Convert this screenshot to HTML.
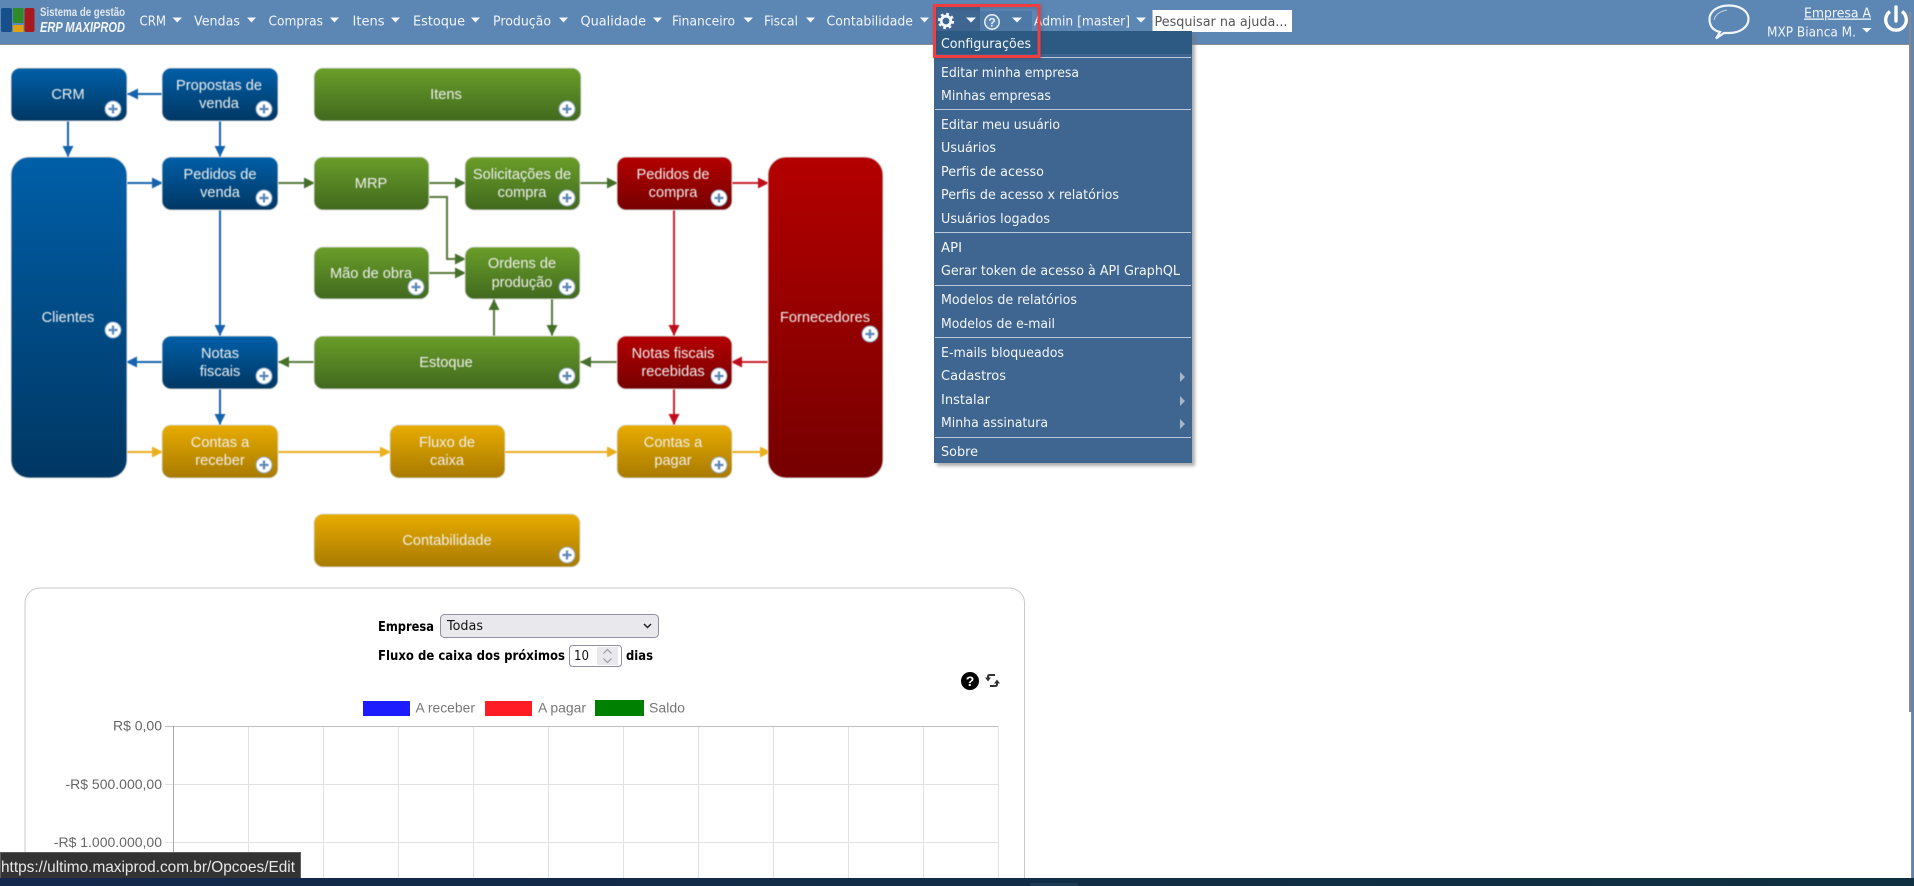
<!DOCTYPE html>
<html lang="pt-BR">
<head>
<meta charset="utf-8">
<title>ERP MAXIPROD</title>
<style>
html,body{margin:0;padding:0;width:1914px;height:886px;overflow:hidden;background:#fff}
svg{display:block}
.nav{font:13px "DejaVu Sans","Liberation Sans",sans-serif;fill:#f1f5f9}
.m{font:13px "DejaVu Sans","Liberation Sans",sans-serif;fill:#f4f6f9}
.d{font:14.6px "Liberation Sans",Arial,sans-serif;fill:#f0f0f0;text-anchor:middle}
.b{font:bold 13px "DejaVu Sans","Liberation Sans",sans-serif;fill:#000}
.r{font:13px "DejaVu Sans","Liberation Sans",sans-serif;fill:#111}
.l{font:14px "Liberation Sans",Arial,sans-serif;fill:#777}
.a{font:14px "Liberation Sans",Arial,sans-serif;fill:#666;text-anchor:end}
</style>
</head>
<body>
<svg width="1914" height="886" viewBox="0 0 1914 886" xmlns="http://www.w3.org/2000/svg">
<defs>
<linearGradient id="gb" x1="0" y1="0" x2="0" y2="1"><stop offset="0" stop-color="#005fa8"/><stop offset="1" stop-color="#003763"/></linearGradient>
<linearGradient id="gg" x1="0" y1="0" x2="0" y2="1"><stop offset="0" stop-color="#6a9e29"/><stop offset="1" stop-color="#41691e"/></linearGradient>
<linearGradient id="gr" x1="0" y1="0" x2="0" y2="1"><stop offset="0" stop-color="#b40000"/><stop offset="1" stop-color="#760000"/></linearGradient>
<linearGradient id="gy" x1="0" y1="0" x2="0" y2="1"><stop offset="0" stop-color="#e8ac00"/><stop offset="1" stop-color="#a87a00"/></linearGradient>
<linearGradient id="tb" x1="0" y1="0" x2="1" y2="0"><stop offset="0" stop-color="#13284c"/><stop offset="1" stop-color="#0f3040"/></linearGradient>
<marker id="ab" markerUnits="userSpaceOnUse" markerWidth="12" markerHeight="12" refX="11" refY="6" orient="auto"><path d="M0 .5L11 6L0 11.5z" fill="#1563ad"/></marker>
<marker id="ag" markerUnits="userSpaceOnUse" markerWidth="12" markerHeight="12" refX="11" refY="6" orient="auto"><path d="M0 .5L11 6L0 11.5z" fill="#46702a"/></marker>
<marker id="ar" markerUnits="userSpaceOnUse" markerWidth="12" markerHeight="12" refX="11" refY="6" orient="auto"><path d="M0 .5L11 6L0 11.5z" fill="#c00d1a"/></marker>
<marker id="ay" markerUnits="userSpaceOnUse" markerWidth="12" markerHeight="12" refX="11" refY="6" orient="auto"><path d="M0 .5L11 6L0 11.5z" fill="#ebae1c"/></marker>
<g id="plus"><circle r="8" fill="#fff" stroke="#8fa9c9" stroke-width="1"/><path d="M-4.5 0H4.5M0-4.5V4.5" stroke="#5b86b8" stroke-width="2.2"/></g>
</defs>

<rect width="1914" height="886" fill="#fff"/>

<!-- Diagram -->
<g style="filter:blur(.4px)">
<g fill="none" stroke-width="2">
<g stroke="#1563ad">
<path d="M162 94H127" marker-end="url(#ab)"/>
<path d="M68 121V157" marker-end="url(#ab)"/>
<path d="M220 121V157" marker-end="url(#ab)"/>
<path d="M127 183H163" marker-end="url(#ab)"/>
<path d="M220 210V336" marker-end="url(#ab)"/>
<path d="M162 362H126" marker-end="url(#ab)"/>
<path d="M220 389V425" marker-end="url(#ab)"/>
</g>
<g stroke="#55793a">
<path d="M278 183H315" marker-end="url(#ag)"/>
<path d="M429 183H466" marker-end="url(#ag)"/>
<path d="M429 197H447V259H466" marker-end="url(#ag)"/>
<path d="M429 273H466" marker-end="url(#ag)"/>
<path d="M580 183H618" marker-end="url(#ag)"/>
<path d="M617 362H580" marker-end="url(#ag)"/>
<path d="M314 362H278" marker-end="url(#ag)"/>
<path d="M494 336V299" marker-end="url(#ag)"/>
<path d="M552 299V336" marker-end="url(#ag)"/>
</g>
<g stroke="#c8202b">
<path d="M732 183H769" marker-end="url(#ar)"/>
<path d="M674 210V336" marker-end="url(#ar)"/>
<path d="M768 362H731" marker-end="url(#ar)"/>
<path d="M674 389V425" marker-end="url(#ar)"/>
</g>
<g stroke="#ebae1c">
<path d="M127 452H163" marker-end="url(#ay)"/>
<path d="M278 452H391" marker-end="url(#ay)"/>
<path d="M505 452H618" marker-end="url(#ay)"/>
<path d="M732 452H771" marker-end="url(#ay)"/>
</g>
</g>

<g stroke="#dcdcdc" stroke-width="1">
<rect x="11" y="68" width="116" height="53" rx="9" fill="url(#gb)"/>
<rect x="162" y="68" width="116" height="53" rx="9" fill="url(#gb)"/>
<rect x="314" y="68" width="267" height="53" rx="9" fill="url(#gg)"/>
<rect x="11" y="157" width="116" height="321" rx="18" fill="url(#gb)"/>
<rect x="162" y="157" width="116" height="53" rx="9" fill="url(#gb)"/>
<rect x="314" y="157" width="115" height="53" rx="9" fill="url(#gg)"/>
<rect x="465" y="157" width="115" height="53" rx="9" fill="url(#gg)"/>
<rect x="617" y="157" width="115" height="53" rx="9" fill="url(#gr)"/>
<rect x="768" y="157" width="115" height="321" rx="18" fill="url(#gr)"/>
<rect x="314" y="247" width="115" height="52" rx="9" fill="url(#gg)"/>
<rect x="465" y="247" width="115" height="52" rx="9" fill="url(#gg)"/>
<rect x="162" y="336" width="116" height="53" rx="9" fill="url(#gb)"/>
<rect x="314" y="336" width="266" height="53" rx="9" fill="url(#gg)"/>
<rect x="617" y="336" width="115" height="53" rx="9" fill="url(#gr)"/>
<rect x="162" y="425" width="116" height="53" rx="9" fill="url(#gy)"/>
<rect x="390" y="425" width="115" height="53" rx="9" fill="url(#gy)"/>
<rect x="617" y="425" width="115" height="53" rx="9" fill="url(#gy)"/>
<rect x="314" y="514" width="266" height="53" rx="9" fill="url(#gy)"/>
</g>

<text class="d" x="68" y="99">CRM</text>
<text class="d" x="219" y="90">Propostas de</text><text class="d" x="219" y="108">venda</text>
<text class="d" x="446" y="99">Itens</text>
<text class="d" x="68" y="322">Clientes</text>
<text class="d" x="220" y="179">Pedidos de</text><text class="d" x="220" y="197">venda</text>
<text class="d" x="371" y="188">MRP</text>
<text class="d" x="522" y="179">Solicitações de</text><text class="d" x="522" y="197">compra</text>
<text class="d" x="673" y="179">Pedidos de</text><text class="d" x="673" y="197">compra</text>
<text class="d" x="825" y="322">Fornecedores</text>
<text class="d" x="371" y="278">Mão de obra</text>
<text class="d" x="522" y="268">Ordens de</text><text class="d" x="522" y="287">produção</text>
<text class="d" x="220" y="358">Notas</text><text class="d" x="220" y="376">fiscais</text>
<text class="d" x="446" y="367">Estoque</text>
<text class="d" x="673" y="358">Notas fiscais</text><text class="d" x="673" y="376">recebidas</text>
<text class="d" x="220" y="447">Contas a</text><text class="d" x="220" y="465">receber</text>
<text class="d" x="447" y="447">Fluxo de</text><text class="d" x="447" y="465">caixa</text>
<text class="d" x="673" y="447">Contas a</text><text class="d" x="673" y="465">pagar</text>
<text class="d" x="447" y="545">Contabilidade</text>

<use href="#plus" x="113" y="109"/><use href="#plus" x="264" y="109"/><use href="#plus" x="567" y="109"/>
<use href="#plus" x="264" y="198"/><use href="#plus" x="567" y="198"/><use href="#plus" x="719" y="198"/>
<use href="#plus" x="113" y="330"/><use href="#plus" x="870" y="334"/>
<use href="#plus" x="416" y="287"/><use href="#plus" x="567" y="287"/>
<use href="#plus" x="264" y="376"/><use href="#plus" x="567" y="376"/><use href="#plus" x="719" y="376"/>
<use href="#plus" x="264" y="465"/><use href="#plus" x="719" y="465"/><use href="#plus" x="567" y="555"/>
</g>

<!-- Chart panel -->
<rect x="25" y="588" width="999.5" height="330" rx="15" fill="#fff" stroke="#c9c9c9"/>
<text class="b" x="378" y="631" textLength="56" lengthAdjust="spacingAndGlyphs">Empresa</text>
<rect x="440.5" y="614.5" width="218" height="23" rx="4" fill="#e9e9ed" stroke="#8f8f9d"/>
<text class="r" x="447" y="630" textLength="36" lengthAdjust="spacingAndGlyphs">Todas</text>
<path d="M644 624l3.5 3.5L651 624" fill="none" stroke="#222" stroke-width="1.5"/>
<text class="b" x="378" y="660" textLength="187" lengthAdjust="spacingAndGlyphs">Fluxo de caixa dos próximos</text>
<rect x="569.5" y="645.5" width="52" height="21" rx="3" fill="#fff" stroke="#8f8f9d"/>
<text class="r" x="574" y="660" textLength="15" lengthAdjust="spacingAndGlyphs">10</text>
<rect x="597" y="647" width="21" height="18" fill="#e9e9ed"/>
<path d="M603.5 653.5l4-4 4 4M603.5 658.5l4 4 4-4" fill="none" stroke="#9a9aa2" stroke-width="1.2"/>
<text class="b" x="626" y="660" textLength="27" lengthAdjust="spacingAndGlyphs">dias</text>

<circle cx="970" cy="681" r="9" fill="#000"/>
<text x="970" y="686" text-anchor="middle" style="font:bold 14px 'Liberation Sans',sans-serif;fill:#fff">?</text>
<path d="M988 678V676.5Q988 675 990 675H995M997 683V684.5Q997 686 995 686H990" fill="none" stroke="#333" stroke-width="2"/>
<path d="M985 677.5h6l-3 4zM994 683.5h6l-3-4z" fill="#333"/>

<rect x="363" y="701" width="47" height="15" fill="#1c1cff"/>
<text class="l" x="415.5" y="712.5" textLength="59.5" lengthAdjust="spacingAndGlyphs">A receber</text>
<rect x="485" y="701" width="47" height="15" fill="#ff1c24"/>
<text class="l" x="538" y="712.5" textLength="48" lengthAdjust="spacingAndGlyphs">A pagar</text>
<rect x="595" y="700" width="49" height="16" fill="#008000"/>
<text class="l" x="649" y="712.5" textLength="36" lengthAdjust="spacingAndGlyphs">Saldo</text>

<g stroke="#e2e2e2" stroke-width="1">
<path d="M248.5 726V878M323.5 726V878M398.5 726V878M473.5 726V878M548.5 726V878M623.5 726V878M698.5 726V878M773.5 726V878M848.5 726V878M923.5 726V878M998.5 726V878"/>
<path d="M165 784.5H998M165 842.5H998"/>
</g>
<path d="M165 726.5H998" stroke="#bdbdbd"/>
<path d="M173.5 726V878" stroke="#aaa"/>
<text class="a" x="162" y="730.5">R$ 0,00</text>
<text class="a" x="162" y="789">-R$ 500.000,00</text>
<text class="a" x="162" y="847">-R$ 1.000.000,00</text>

<!-- Navbar -->
<rect width="1911" height="45" fill="#5c86b3"/>
<rect y="44" width="1911" height="1" fill="#8a8f96"/>
<rect x="935" y="4" width="45" height="27" fill="#3e6690"/>
<rect x="980" y="11" width="52" height="20" fill="#4e78a5"/>

<!-- Logo -->
<rect x="1" y="8" width="11" height="24" rx="2" fill="#164f8a"/>
<rect x="13" y="8" width="10.5" height="15" fill="#2f8a2a"/>
<rect x="13" y="25" width="10.5" height="7" fill="#e0a010"/>
<rect x="24.5" y="8" width="10" height="24" rx="2" fill="#a81a1e"/>
<text x="40" y="16" textLength="85" lengthAdjust="spacingAndGlyphs" style="font:bold 12px 'Liberation Sans',sans-serif;fill:#e0e7ef">Sistema de gestão</text>
<text x="40" y="32" textLength="85" lengthAdjust="spacingAndGlyphs" style="font:italic bold 14.5px 'Liberation Sans',sans-serif;fill:#f4f6f9">ERP MAXIPROD</text>

<g>
<text class="nav" x="139.5" y="25.5" textLength="26.5" lengthAdjust="spacingAndGlyphs">CRM</text>
<text class="nav" x="194" y="25.5" textLength="46" lengthAdjust="spacingAndGlyphs">Vendas</text>
<text class="nav" x="268.5" y="25.5" textLength="54.5" lengthAdjust="spacingAndGlyphs">Compras</text>
<text class="nav" x="352.5" y="25.5" textLength="32" lengthAdjust="spacingAndGlyphs">Itens</text>
<text class="nav" x="413" y="25.5" textLength="52" lengthAdjust="spacingAndGlyphs">Estoque</text>
<text class="nav" x="493" y="25.5" textLength="58" lengthAdjust="spacingAndGlyphs">Produção</text>
<text class="nav" x="580.5" y="25.5" textLength="65.5" lengthAdjust="spacingAndGlyphs">Qualidade</text>
<text class="nav" x="672" y="25.5" textLength="63" lengthAdjust="spacingAndGlyphs">Financeiro</text>
<text class="nav" x="764" y="25.5" textLength="34" lengthAdjust="spacingAndGlyphs">Fiscal</text>
<text class="nav" x="826.5" y="25.5" textLength="86.5" lengthAdjust="spacingAndGlyphs">Contabilidade</text>
<text class="nav" x="1034" y="25.5" textLength="96" lengthAdjust="spacingAndGlyphs">Admin [master]</text>
</g>
<g fill="#f4f7fa">
<path d="M172.5 17.5h9.5l-4.75 5zM247 17.5h9l-4.5 5zM330 17.5h9l-4.5 5zM391 17.5h9l-4.5 5zM471 17.5h9l-4.5 5zM559 17.5h9l-4.5 5zM653 17.5h9l-4.5 5zM743.5 17.5h9.5l-4.75 5zM806 17.5h9l-4.5 5zM920 17.5h9l-4.5 5zM966 17.5h10l-5 5zM1012 17.5h10l-5 5zM1136 17.5h10l-5 5z"/>
</g>

<!-- Gear & help -->
<circle cx="946" cy="21" r="4.8" fill="none" stroke="#f4f7fa" stroke-width="2.8"/>
<circle cx="946" cy="21" r="7" fill="none" stroke="#f4f7fa" stroke-width="2.4" stroke-dasharray="2.75 2.75"/>
<circle cx="992" cy="22" r="7.2" fill="#5c86b3" stroke="#e8eef5" stroke-width="1.5"/>
<text x="992" y="26.5" text-anchor="middle" style="font:bold 12px 'Liberation Sans',sans-serif;fill:#e8eef5">?</text>

<!-- Search -->
<rect x="1152.5" y="10" width="139.5" height="22" fill="#fff"/>
<text x="1154.5" y="26" textLength="133" lengthAdjust="spacingAndGlyphs" style="font:13px 'DejaVu Sans',sans-serif;fill:#555">Pesquisar na ajuda...</text>

<!-- Right side -->
<path d="M1720 32C1711 30 1709.5 24 1709.5 19C1709.5 11 1718 5.5 1729 5.5C1740 5.5 1748.5 11 1748.5 19C1748.5 27 1740 33 1729 33Q1726 33 1724 33L1716 38.5Z" fill="none" stroke="#f2f5f9" stroke-width="2.2"/>
<path d="M1714 20Q1716 12 1727 10" fill="none" stroke="#f2f5f9" stroke-width="1" opacity=".7"/>
<text class="nav" x="1804" y="17.5" textLength="67" lengthAdjust="spacingAndGlyphs" text-decoration="underline">Empresa A</text>
<text class="nav" x="1767" y="36.5" textLength="89" lengthAdjust="spacingAndGlyphs">MXP Bianca M.</text>
<path d="M1862 28h9.5l-4.75 4.5z" fill="#f4f7fa"/>
<path d="M1890 11.5A10.3 10.3 0 1 0 1902 11.5" fill="none" stroke="#fff" stroke-width="3.4"/>
<path d="M1896 7V21" stroke="#fff" stroke-width="3.4" stroke-linecap="round"/>

<!-- Dropdown -->
<rect x="937" y="34" width="258" height="432" fill="#777" opacity=".6" style="filter:blur(1.5px)"/>
<rect x="934" y="31" width="258" height="432" fill="#3e6690"/>
<rect x="934" y="31" width="258" height="23" fill="#2d5a82"/>
<g fill="#b9c8da">
<rect x="935" y="57" width="256" height="1"/><rect x="935" y="109" width="256" height="1"/><rect x="935" y="232" width="256" height="1"/>
<rect x="935" y="285" width="256" height="1"/><rect x="935" y="337" width="256" height="1"/><rect x="935" y="437" width="256" height="1"/>
</g>
<text class="m" x="941" y="48" textLength="90" lengthAdjust="spacingAndGlyphs">Configurações</text>
<text class="m" x="941" y="77" textLength="138" lengthAdjust="spacingAndGlyphs">Editar minha empresa</text>
<text class="m" x="941" y="100" textLength="110" lengthAdjust="spacingAndGlyphs">Minhas empresas</text>
<text class="m" x="941" y="129" textLength="119" lengthAdjust="spacingAndGlyphs">Editar meu usuário</text>
<text class="m" x="941" y="152" textLength="55" lengthAdjust="spacingAndGlyphs">Usuários</text>
<text class="m" x="941" y="176" textLength="103" lengthAdjust="spacingAndGlyphs">Perfis de acesso</text>
<text class="m" x="941" y="199" textLength="178" lengthAdjust="spacingAndGlyphs">Perfis de acesso x relatórios</text>
<text class="m" x="941" y="223" textLength="109" lengthAdjust="spacingAndGlyphs">Usuários logados</text>
<text class="m" x="941" y="252" textLength="21" lengthAdjust="spacingAndGlyphs">API</text>
<text class="m" x="941" y="275" textLength="239" lengthAdjust="spacingAndGlyphs">Gerar token de acesso à API GraphQL</text>
<text class="m" x="941" y="304" textLength="136" lengthAdjust="spacingAndGlyphs">Modelos de relatórios</text>
<text class="m" x="941" y="328" textLength="114" lengthAdjust="spacingAndGlyphs">Modelos de e-mail</text>
<text class="m" x="941" y="357" textLength="123" lengthAdjust="spacingAndGlyphs">E-mails bloqueados</text>
<text class="m" x="941" y="380" textLength="65" lengthAdjust="spacingAndGlyphs">Cadastros</text>
<text class="m" x="941" y="404" textLength="49" lengthAdjust="spacingAndGlyphs">Instalar</text>
<text class="m" x="941" y="427" textLength="107" lengthAdjust="spacingAndGlyphs">Minha assinatura</text>
<text class="m" x="941" y="456" textLength="37" lengthAdjust="spacingAndGlyphs">Sobre</text>
<path d="M1180 372l5 5-5 5zM1180 396l5 5-5 5zM1180 419l5 5-5 5z" fill="#a9b6c6"/>

<!-- Red highlight -->
<rect x="934.5" y="5.5" width="104.5" height="51" fill="none" stroke="#333" stroke-width="3" opacity=".25" transform="translate(1 1.5)" style="filter:blur(1.5px)"/>
<rect x="934.5" y="5.5" width="104.5" height="51" fill="none" stroke="#f13c40" stroke-width="3"/>

<!-- Right strip / scrollbar -->
<rect x="1911" y="0" width="3" height="878" fill="#5c86b3"/>
<rect x="1909" y="12" width="2" height="700" fill="#888"/>
<rect x="1911" y="712" width="1" height="166" fill="#8b8b8b"/>

<!-- Status tooltip -->
<rect x=".5" y="852.5" width="300" height="27" fill="#333" stroke="#5d5d5d"/>
<text x="1" y="872" textLength="294" lengthAdjust="spacingAndGlyphs" style="font:16px 'Liberation Sans',sans-serif;fill:#e8e8e8">https://ultimo.maxiprod.com.br/Opcoes/Edit</text>

<!-- Taskbar -->
<rect y="878" width="1914" height="8" fill="url(#tb)"/>
<rect x="1030" y="883" width="48" height="3" rx="1" fill="#1c3a52"/>
</svg>
</body>
</html>
